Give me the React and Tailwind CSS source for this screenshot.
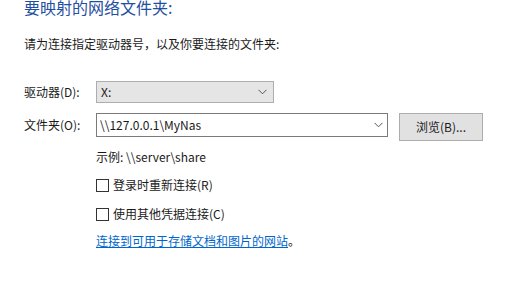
import React from "react";

const Chevron = () => (
  <svg width="9" height="6" viewBox="0 0 9 6" className="shrink-0">
    <path d="M0.5 0.8 L4.5 4.8 L8.5 0.8" fill="none" stroke="#555" strokeWidth="1" />
  </svg>
);

export default function App() {
  const font = { fontFamily: '"Noto Sans CJK SC", "Noto Sans", sans-serif' };
  return (
    <div className="w-[531px] h-[306px] bg-white overflow-hidden text-[12px] text-[#1a1a1a]" style={font}>
      <div className="pl-[24px] flex flex-col">
        <div className="text-[16px] leading-[20px] text-[#1f4fa0] -mt-[3px]">要映射的网络文件夹:</div>
        <div className="mt-[19px] leading-[16px]">请为连接指定驱动器号，以及你要连接的文件夹:</div>

        <div className="mt-[29px] flex items-center h-[22px]">
          <div className="w-[72px] leading-[16px]">驱动器(D):</div>
          <div className="w-[178px] h-[22px] bg-[#e5e5e5] border border-[#adadad] flex items-center justify-between pl-[4px] pr-[6px]">
            <span className="leading-[16px]">X:</span>
            <Chevron />
          </div>
        </div>

        <div className="mt-[10px] flex items-start">
          <div className="w-[72px] leading-[24px]">文件夹(O):</div>
          <div className="w-[292px] h-[24px] bg-white border border-[#7a7a7a] flex items-center justify-between pl-[3px] pr-[4px]">
            <span className="leading-[16px]">\\127.0.0.1\MyNas</span>
            <Chevron />
          </div>
          <div className="ml-[11px] w-[84px] h-[28px] bg-[#e1e1e1] border border-[#adadad] flex items-center justify-center">
            <span className="leading-[16px]">浏览(B)...</span>
          </div>
        </div>

        <div className="pl-[72px] flex flex-col">
          <div className="mt-[8px] leading-[16px]">示例: \\server\share</div>
          <label className="mt-[12px] flex items-center h-[16px]">
            <span className="w-[13px] h-[13px] border border-[#333] bg-white mr-[4px]" />
            <span className="leading-[16px]">登录时重新连接(R)</span>
          </label>
          <label className="mt-[13px] flex items-center h-[16px]">
            <span className="w-[13px] h-[13px] border border-[#333] bg-white mr-[4px]" />
            <span className="leading-[16px]">使用其他凭据连接(C)</span>
          </label>
          <div className="mt-[11px] leading-[16px]">
            <span className="text-[#0066cc] underline">连接到可用于存储文档和图片的网站</span>
            <span>。</span>
          </div>
        </div>
      </div>
    </div>
  );
}
